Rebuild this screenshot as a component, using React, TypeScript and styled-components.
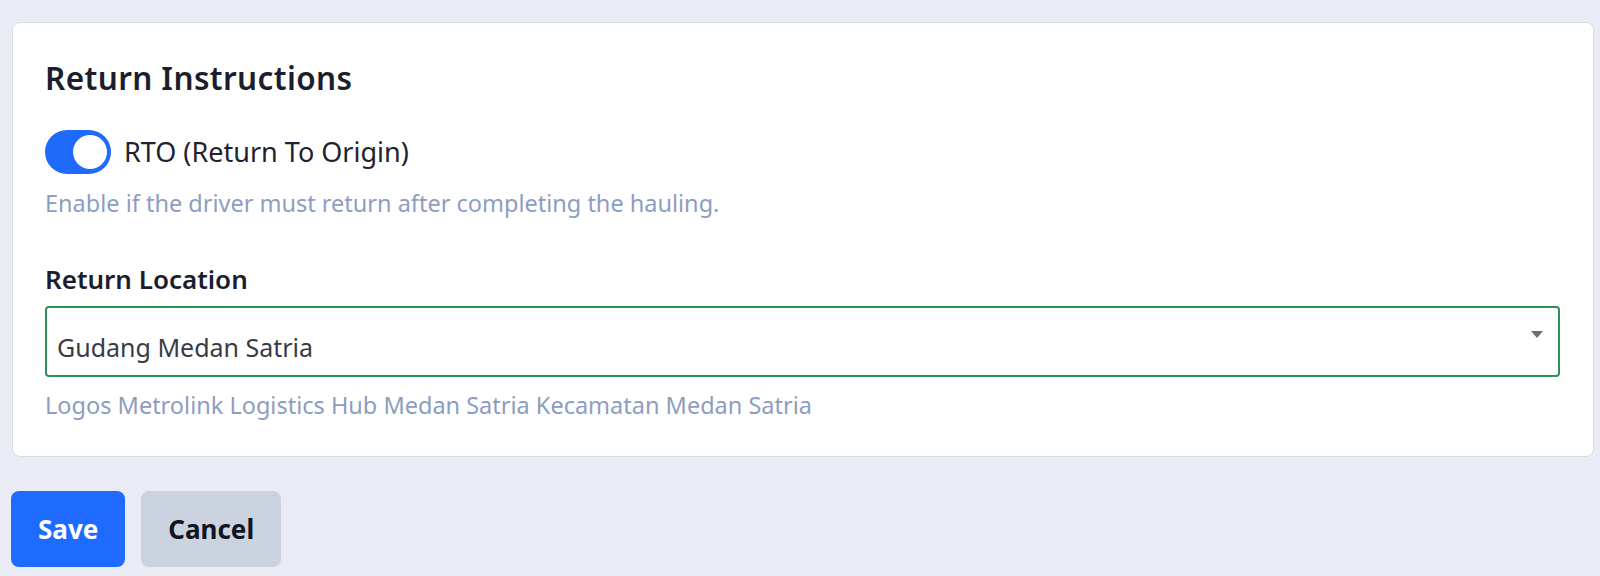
import React, { useState } from "react";
import styled, { createGlobalStyle } from "styled-components";

const Global = createGlobalStyle`
  html, body { margin: 0; padding: 0; background: #e9ecf4; }
  body { font-family: "Noto Sans", "Open Sans", Arial, sans-serif; }
  * { box-sizing: border-box; }
`;

const Page = styled.div`
  padding: 22px 6px 0 12px;
  display: flex;
  flex-direction: column;
  gap: 34px;
`;

const Card = styled.section`
  background: #ffffff;
  border: 1px solid #d6dbe7;
  border-radius: 8px;
  padding: 37px 33px 39px 32px;
  display: flex;
  flex-direction: column;
`;

const Heading = styled.h2`
  margin: 0;
  font-size: 31.5px;
  line-height: 36px;
  letter-spacing: 0.4px;
  font-weight: 600;
  color: #1b1e2c;
`;

const ToggleRow = styled.label`
  margin-top: 34px;
  display: flex;
  align-items: center;
  gap: 13px;
  cursor: pointer;
`;

const Track = styled.span<{ $on: boolean }>`
  position: relative;
  width: 66px;
  height: 44px;
  border-radius: 22px;
  background: ${(p) => (p.$on ? "#1f6af8" : "#c5ccda")};
  flex-shrink: 0;
`;

const Knob = styled.span<{ $on: boolean }>`
  position: absolute;
  top: 5px;
  left: ${(p) => (p.$on ? "28px" : "5px")};
  width: 34px;
  height: 34px;
  border-radius: 50%;
  background: #ffffff;
`;

const ToggleText = styled.span`
  font-size: 27px;
  line-height: 32px;
  color: #1f2230;
`;

const Help = styled.p<{ $top: number }>`
  margin: ${(p) => p.$top}px 0 0 0;
  font-size: 23.5px;
  line-height: 24px;
  color: #8d9dbf;
`;

const Label = styled.div`
  margin-top: 48px;
  font-size: 26px;
  line-height: 32px;
  font-weight: 600;
  color: #1b1e2c;
`;

const SelectBox = styled.div`
  margin-top: 11px;
  height: 71px;
  border: 2px solid #2f8f5b;
  border-radius: 4px;
  display: flex;
  align-items: center;
  justify-content: space-between;
  padding: 0 15px 0 10px;
`;

const SelectValue = styled.span`
  font-size: 25px;
  color: #383b47;
  margin-top: 10px;
`;

const Caret = styled.span`
  width: 0;
  height: 0;
  border-left: 6px solid transparent;
  border-right: 6px solid transparent;
  border-top: 7px solid #6b6e78;
  margin-bottom: 14px;
`;

const Actions = styled.div`
  display: flex;
  gap: 16px;
  margin-left: -1px;
`;

const Button = styled.button<{ $primary?: boolean }>`
  height: 76px;
  padding: 0 ${(p) => (p.$primary ? "27px" : "27px")};
  border: none;
  border-radius: 8px;
  font-family: inherit;
  font-size: 26px;
  font-weight: 700;
  background: ${(p) => (p.$primary ? "#1f6bff" : "#cbd3e1")};
  color: ${(p) => (p.$primary ? "#ffffff" : "#121420")};
  cursor: pointer;
`;

export default function App() {
  const [on, setOn] = useState(true);
  return (
    <>
      <Global />
      <Page>
        <Card>
          <Heading>Return Instructions</Heading>
          <ToggleRow onClick={() => setOn(!on)}>
            <Track $on={on}>
              <Knob $on={on} />
            </Track>
            <ToggleText>RTO (Return To Origin)</ToggleText>
          </ToggleRow>
          <Help $top={17}>Enable if the driver must return after completing the hauling.</Help>
          <Label>Return Location</Label>
          <SelectBox>
            <SelectValue>Gudang Medan Satria</SelectValue>
            <Caret />
          </SelectBox>
          <Help $top={16}>Logos Metrolink Logistics Hub Medan Satria Kecamatan Medan Satria</Help>
        </Card>
        <Actions>
          <Button $primary>Save</Button>
          <Button>Cancel</Button>
        </Actions>
      </Page>
    </>
  );
}
